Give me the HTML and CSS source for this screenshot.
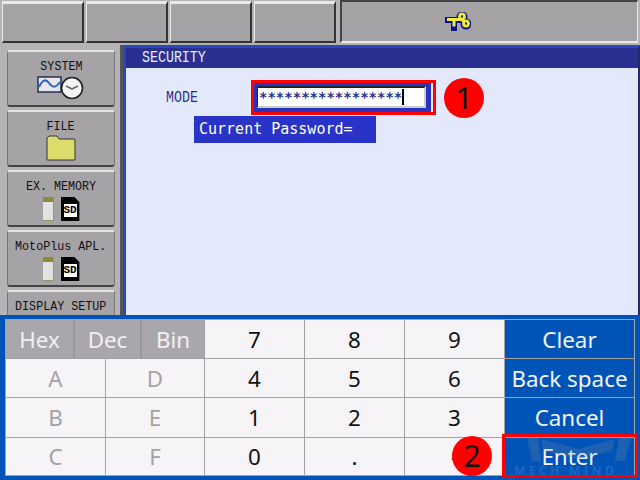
FILE: index.html
```html
<!DOCTYPE html>
<html lang="en">
<head>
  <meta charset="UTF-8" />
  <title>Security</title>
  <link rel="stylesheet" href="styles.css">
</head>
<body>
  <div class="screen">
    <div class="topbar">
      <div class="top-btn"></div>
      <div class="top-btn"></div>
      <div class="top-btn"></div>
      <div class="top-btn"></div>
      <div class="top-status">
        <svg class="key-icon" width="26" height="20" viewBox="0 0 26 20">
          <g fill="none" stroke="#10108c" stroke-width="6" stroke-linecap="square">
            <path d="M3 8h15M9 8v8"/>
            <circle cx="17" cy="5" r="2.5"/>
            <circle cx="21" cy="12" r="2.5"/>
          </g>
          <g fill="none" stroke="#ecec3c" stroke-width="3">
            <path d="M2 7.5h15M9 7.5v7M17 8l3 2"/>
            <circle cx="17" cy="4.5" r="2.4"/>
            <circle cx="21" cy="11.5" r="2.4"/>
          </g>
          <circle cx="17" cy="4.5" r="1.1" fill="#222"/>
          <circle cx="21" cy="11.5" r="1.1" fill="#222"/>
        </svg>
      </div>
    </div>

    <div class="middle">
      <div class="side">
        <div class="side-btn">
          <span class="side-label">SYSTEM</span>
          <svg class="side-icon" width="50" height="26" viewBox="0 0 50 26">
            <rect x="2" y="2" width="23" height="15" fill="#e6e6ea" stroke="#25304f" stroke-width="1.5"/>
            <path d="M3 12c4-8 7-8 10-4s6 6 11-1" fill="none" stroke="#2f62c4" stroke-width="2"/>
            <circle cx="36" cy="13" r="10.5" fill="#f4f4f4" stroke="#222" stroke-width="1.6"/>
            <path d="M36 14l-6-3M36 14l6-3" stroke="#666" stroke-width="1.6"/>
          </svg>
        </div>
        <div class="side-btn">
          <span class="side-label">FILE</span>
          <svg class="side-icon" width="30" height="26" viewBox="0 0 30 26">
            <path d="M1 25V3l2-2h8l2 3h15l1 1v20z" fill="#dcdc6c" stroke="#333" stroke-width="1"/>
          </svg>
        </div>
        <div class="side-btn">
          <span class="side-label">EX. MEMORY</span>
          <div class="media">
            <div class="usb"></div>
            <div class="sd">SD</div>
          </div>
        </div>
        <div class="side-btn">
          <span class="side-label">MotoPlus APL.</span>
          <div class="media">
            <div class="usb"></div>
            <div class="sd">SD</div>
          </div>
        </div>
        <div class="side-btn">
          <span class="side-label">DISPLAY SETUP</span>
        </div>
      </div>

      <div class="panel">
        <div class="panel-title"><span class="tall-text">SECURITY</span></div>
        <div class="panel-body">
          <div class="mode-row">
            <span class="mode-label"><span class="tall-text">MODE</span></span>
            <div class="pass-box"><div class="pass-input">*****************<span class="caret"></span></div></div>
          </div>
          <div class="prompt">Current Password=</div>
        </div>
      </div>
    </div>

    <div class="keypad">
      <div class="keys">
        <div class="radix">
          <div class="radix-key">Hex</div>
          <div class="radix-key">Dec</div>
          <div class="radix-key">Bin</div>
        </div>
        <div class="key">7</div>
        <div class="key">8</div>
        <div class="key">9</div>
        <div class="key action">Clear</div>

        <div class="key off">A</div>
        <div class="key off">D</div>
        <div class="key">4</div>
        <div class="key">5</div>
        <div class="key">6</div>
        <div class="key action">Back space</div>

        <div class="key off">B</div>
        <div class="key off">E</div>
        <div class="key">1</div>
        <div class="key">2</div>
        <div class="key">3</div>
        <div class="key action">Cancel</div>

        <div class="key off">C</div>
        <div class="key off">F</div>
        <div class="key">0</div>
        <div class="key">.</div>
        <div class="key">-</div>
        <div class="key action">Enter</div>
      </div>
    </div>

    <!-- annotations drawn over the screenshot -->
    <div class="mark mark-input"></div>
    <div class="mark mark-enter"></div>
    <div class="badge badge-one">1</div>
    <div class="badge badge-two">2</div>
    <svg class="logo-mark" width="104" height="26" viewBox="0 0 104 26">
      <path d="M0 0h11l3 24H5zM104 0H92l-4 24h10zM14 2l38 10L88 2l-3 12-33 8-35-8z" fill="#8a8f9c" fill-opacity=".22"/>
    </svg>
    <div class="watermark">MECH MIND</div>
  </div>
</body>
</html>
```

FILE: styles.css
```css
:root {
  --gray: #a5a3a6;
  --navy: #2a3090;
  --blue: #0054b8;
  --pale: #e4e8fb;
  --line: #a3a1a6;
  --key: #f7f4f8;
}

* {
  margin: 0;
  padding: 0;
  box-sizing: border-box;
}

body {
  width: 640px;
  height: 480px;
  overflow: hidden;
}

.screen {
  position: relative;
  width: 640px;
  height: 480px;
  background: #b4b4b6;
  display: flex;
  flex-direction: column;
  font-family: "Liberation Mono", monospace;
  overflow: hidden;
}

.topbar {
  height: 45px;
  flex-shrink: 0;
  display: flex;
  gap: 2px;
  padding: 1px 2px 2px 2px;
  background: #b4b4b6;
}

.top-btn {
  width: 82px;
  background: var(--gray);
  border-top: 3px solid #e8e8e8;
  border-left: 1px solid #e8e8e8;
  border-bottom: 2px solid #333;
  border-right: 2px solid #333;
}

.top-status {
  flex: 1;
  margin: -1px 0 0 2px;
  background: var(--gray);
  border-top: 2px solid #444;
  border-left: 2px solid #444;
  border-right: 1px solid #e8e8e8;
  border-bottom: 2px solid #e8e8e8;
  display: flex;
  justify-content: center;
  padding: 10px 64px 0 0;
}

.middle {
  flex: 1;
  min-height: 0;
  display: flex;
  background: #b4b4b6;
}

.side {
  width: 123px;
  flex-shrink: 0;
  padding: 5px 5px 0 7px;
  border-right: 3px solid #55555a;
  display: flex;
  flex-direction: column;
  gap: 3px;
  overflow: hidden;
}

.side-btn {
  height: 57px;
  flex-shrink: 0;
  background: var(--gray);
  border: 1px solid #777;
  border-top: 2px solid #e4e4e4;
  border-bottom: 2px solid #444;
  border-radius: 3px;
  display: flex;
  flex-direction: column;
  align-items: center;
  padding-top: 9px;
}

.side-label {
  font-size: 13px;
  line-height: 12px;
  color: #111;
  white-space: pre;
  transform: scaleX(.9);
}

.side-icon {
  display: block;
  margin-top: 2px;
}

.media {
  display: flex;
  gap: 7px;
  margin-top: 4px;
}

.usb {
  width: 11px;
  height: 24px;
  background: linear-gradient(#8e8a3c 0 5px, #e2e2e2 5px);
  border-right: 1px solid #99985c;
  border-bottom: 1px solid #99985c;
}

.sd {
  width: 19px;
  height: 24px;
  background: #fff;
  border: 3px solid #000;
  border-top-width: 7px;
  border-bottom-width: 4px;
  font: bold 11px/13px "Liberation Mono", monospace;
  color: #000;
  text-align: center;
  clip-path: polygon(0 0, 14px 0, 100% 5px, 100% 100%, 0 100%);
}

.panel {
  flex: 1;
  display: flex;
  flex-direction: column;
  background: var(--pale);
  border: 3px solid #2b48b8;
  border-right: 2px solid #222a70;
  border-bottom: none;
}

.panel-title {
  height: 20px;
  flex-shrink: 0;
  background: var(--navy);
  color: #e8ecff;
  line-height: 20px;
  padding-left: 16px;
}

/* the controller font is tall and narrow */
.tall-text {
  display: inline-block;
  font-size: 16px;
  transform: scaleX(.83);
  transform-origin: left center;
}

.panel-body {
  flex: 1;
  padding-top: 12px;
}

.mode-row {
  display: flex;
  align-items: center;
  height: 35px;
  padding-left: 40px;
  color: var(--navy);
}

.mode-label {
  width: 87px;
}

.pass-box {
  width: 178px;
  height: 29px;
  padding: 3px 5px 4px 4px;
  background: #2a33c0;
}

.pass-input {
  height: 22px;
  background: #fff;
  border-top: 2px solid #222;
  border-left: 1px solid #222;
  border-right: 2px solid #ccc;
  border-bottom: 2px solid #ccc;
  font: bold 14px/18px "DejaVu Sans Mono", monospace;
  color: var(--navy);
  white-space: nowrap;
  padding-left: 1px;
  display: flex;
  align-items: center;
}

.caret {
  width: 2px;
  height: 16px;
  background: #000;
}

.prompt {
  width: 182px;
  height: 27px;
  margin: 1px 0 0 68px;
  background: #2a33c8;
  color: #fff;
  font: 15px/26px "DejaVu Sans Mono", monospace;
  padding-left: 5px;
}

.keypad {
  height: 165px;
  flex-shrink: 0;
  background: var(--blue);
  padding: 4px 5px;
}

.keys {
  width: 630px;
  height: 157px;
  display: grid;
  grid-template-columns: 100px 99px 100px 100px 100px 1fr;
  grid-template-rows: 39px 39px 40px 1fr;
  background: var(--key);
  border: 1px solid var(--line);
  font-family: "Noto Sans", sans-serif;
  font-size: 22.4px;
}

.key {
  display: flex;
  align-items: center;
  justify-content: center;
  color: #111;
  border-right: 1px solid var(--line);
  border-bottom: 1px solid var(--line);
}

.key:nth-last-child(-n+6) {
  border-bottom: none;
}

.key.off {
  color: #a5a3a8;
}

.key.action {
  background: var(--blue);
  color: #f2f4fa;
  border-right: none;
}

.radix {
  grid-column: span 2;
  display: grid;
  grid-template-columns: 69px 67px 1fr;
  background: #a9a7ab;
  border-right: 1px solid var(--line);
  border-bottom: 1px solid var(--line);
}

.radix-key {
  display: flex;
  align-items: center;
  justify-content: center;
  color: #f0eff2;
  border-right: 2px solid #98969c;
}

.radix-key:last-child {
  border-right: none;
}

.mark {
  position: absolute;
  border: 3px solid #f00;
}

.mark-input {
  left: 251px;
  top: 80px;
  width: 185px;
  height: 35px;
}

.mark-enter {
  left: 502px;
  top: 434px;
  width: 136px;
  height: 44px;
}

.badge {
  position: absolute;
  width: 40px;
  height: 40px;
  border-radius: 50%;
  background: #f00;
  color: #111;
  font: 30px/40px "Noto Sans", sans-serif;
  text-align: center;
}

.badge-one {
  left: 444px;
  top: 78px;
}

.badge-two {
  left: 452px;
  top: 436px;
}

.logo-mark {
  position: absolute;
  left: 527px;
  top: 437px;
}

.watermark {
  position: absolute;
  left: 514px;
  top: 464px;
  font: bold 12px/13px "Noto Sans", sans-serif;
  letter-spacing: 3.4px;
  color: rgba(190, 195, 210, .18);
  white-space: nowrap;
}
```
